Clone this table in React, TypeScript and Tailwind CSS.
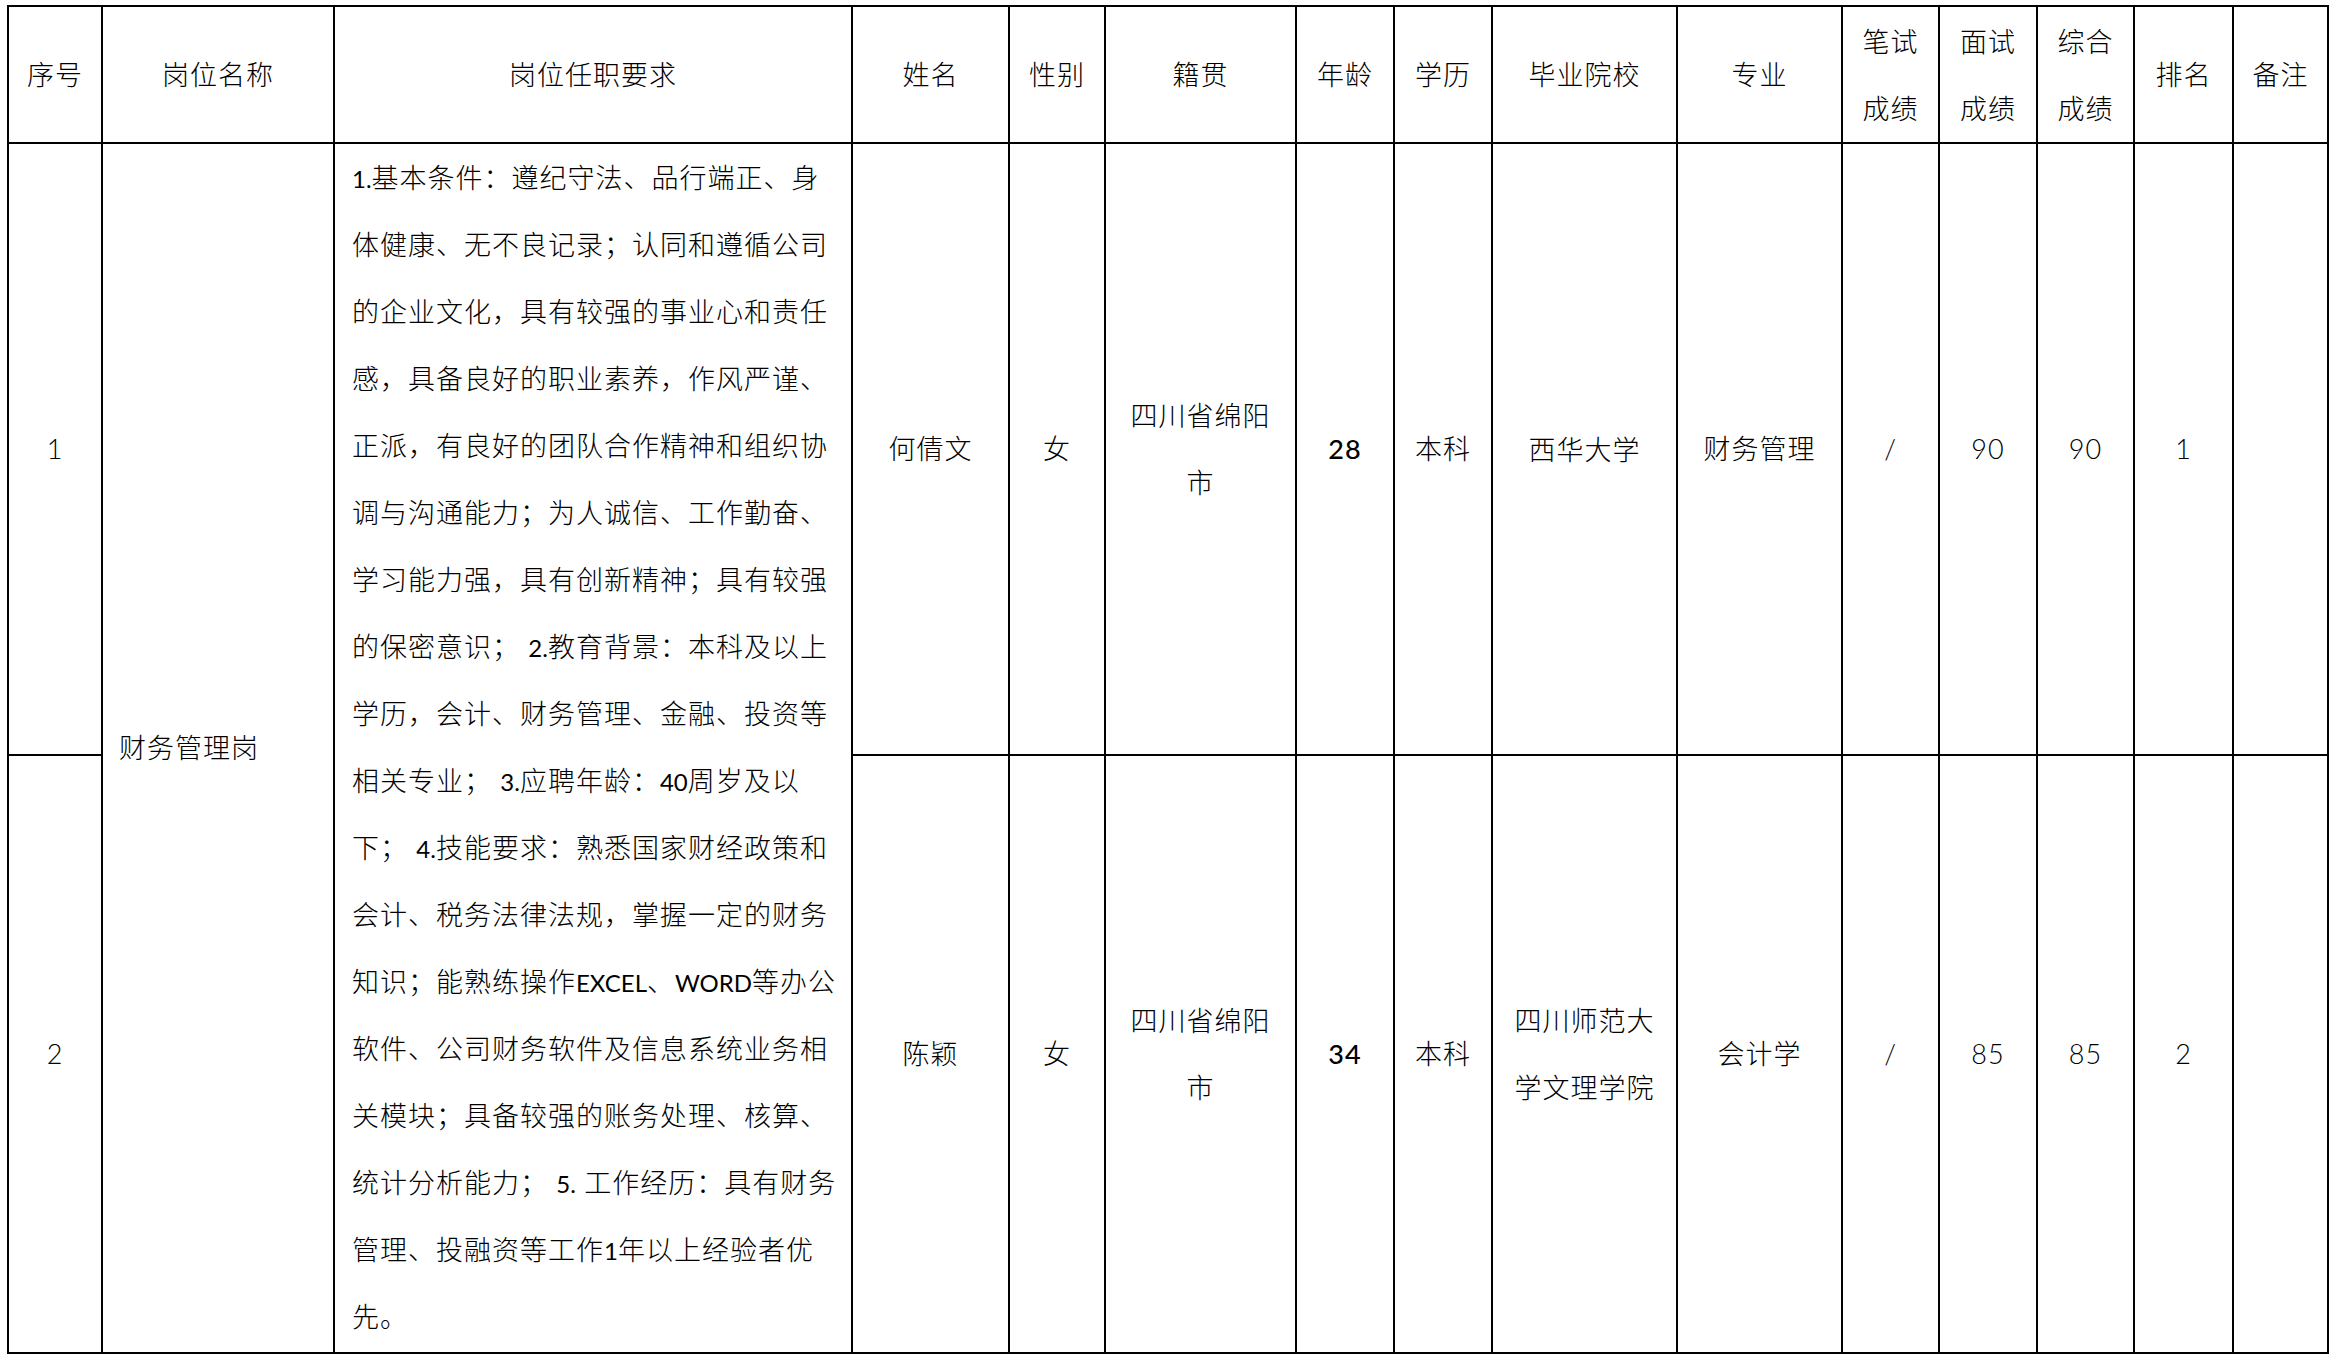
import React from "react";

const colClass = [
  "w-[94px]",
  "w-[232px]",
  "w-[518px]",
  "w-[157px]",
  "w-[96px]",
  "w-[191px]",
  "w-[98px]",
  "w-[98px]",
  "w-[185px]",
  "w-[165px]",
  "w-[97px]",
  "w-[98px]",
  "w-[97px]",
  "w-[99px]",
  "w-[95px]",
];

const requirementLines = [
  "1.基本条件：遵纪守法、品行端正、身",
  "体健康、无不良记录；认同和遵循公司",
  "的企业文化，具有较强的事业心和责任",
  "感，具备良好的职业素养，作风严谨、",
  "正派，有良好的团队合作精神和组织协",
  "调与沟通能力；为人诚信、工作勤奋、",
  "学习能力强，具有创新精神；具有较强",
  "的保密意识； 2.教育背景：本科及以上",
  "学历，会计、财务管理、金融、投资等",
  "相关专业； 3.应聘年龄：40周岁及以",
  "下； 4.技能要求：熟悉国家财经政策和",
  "会计、税务法律法规，掌握一定的财务",
  "知识；能熟练操作EXCEL、WORD等办公",
  "软件、公司财务软件及信息系统业务相",
  "关模块；具备较强的账务处理、核算、",
  "统计分析能力； 5. 工作经历：具有财务",
  "管理、投融资等工作1年以上经验者优",
  "先。",
];

const headers: string[][] = [
  ["序号"],
  ["岗位名称"],
  ["岗位任职要求"],
  ["姓名"],
  ["性别"],
  ["籍贯"],
  ["年龄"],
  ["学历"],
  ["毕业院校"],
  ["专业"],
  ["笔试", "成绩"],
  ["面试", "成绩"],
  ["综合", "成绩"],
  ["排名"],
  ["备注"],
];

const people = [
  {
    no: "1",
    name: "何倩文",
    sex: "女",
    origin: ["四川省绵阳", "市"],
    age: "28",
    edu: "本科",
    school: ["西华大学"],
    major: "财务管理",
    written: "/",
    interview: "90",
    total: "90",
    rank: "1",
    h: "h-[612px]",
  },
  {
    no: "2",
    name: "陈颖",
    sex: "女",
    origin: ["四川省绵阳", "市"],
    age: "34",
    edu: "本科",
    school: ["四川师范大", "学文理学院"],
    major: "会计学",
    written: "/",
    interview: "85",
    total: "85",
    rank: "2",
    h: "h-[598px]",
  },
];

const cell = "border-2 border-black p-0 text-center align-middle";

// latin runs are narrower in the original (Calibri)
function Mixed({ text }: { text: string }) {
  const parts = text.split(/([A-Za-z0-9.]+)/);
  return (
    <>
      {parts.map((p, i) =>
        /[A-Za-z0-9]/.test(p) ? (
          <span key={i} className="text-[24px] leading-none font-normal tracking-normal">
            {p}
          </span>
        ) : (
          <span key={i}>{p}</span>
        )
      )}
    </>
  );
}

function Lines({ items, mixed }: { items: string[]; mixed?: boolean }) {
  return (
    <>
      {items.map((t, i) => (
        <div key={i} className="leading-[67px] whitespace-nowrap">
          {mixed ? <Mixed text={t} /> : t}
        </div>
      ))}
    </>
  );
}

export default function App() {
  return (
    <div className="min-h-screen bg-white pl-[7px] pt-[5px] text-black">
      <table className="w-[2322px] table-fixed border-collapse font-['Lato','Noto_Sans_CJK_SC',sans-serif] text-[27px] font-light tracking-[1px]">
        <colgroup>
          {colClass.map((c, i) => (
            <col key={i} className={c} />
          ))}
        </colgroup>
        <thead>
          <tr className="h-[137px]">
            {headers.map((h, i) => (
              <th key={i} className={cell + " font-light"}>
                <Lines items={h} />
              </th>
            ))}
          </tr>
        </thead>
        <tbody>
          {people.map((p, idx) => (
            <tr key={p.no} className={p.h}>
              <td className={cell}>{p.no}</td>
              {idx === 0 && (
                <>
                  <td rowSpan={2} className={cell + " pl-[16px] text-left"}>
                    财务管理岗
                  </td>
                  <td rowSpan={2} className={cell + " pl-[17px] text-left align-top"}>
                    <Lines items={requirementLines} mixed />
                  </td>
                </>
              )}
              <td className={cell}>{p.name}</td>
              <td className={cell}>{p.sex}</td>
              <td className={cell}>
                <Lines items={p.origin} />
              </td>
              <td className={cell + " font-medium"}>{p.age}</td>
              <td className={cell}>{p.edu}</td>
              <td className={cell}>
                <Lines items={p.school} />
              </td>
              <td className={cell}>{p.major}</td>
              <td className={cell}>{p.written}</td>
              <td className={cell}>{p.interview}</td>
              <td className={cell}>{p.total}</td>
              <td className={cell}>{p.rank}</td>
              <td className={cell}></td>
            </tr>
          ))}
        </tbody>
      </table>
    </div>
  );
}
